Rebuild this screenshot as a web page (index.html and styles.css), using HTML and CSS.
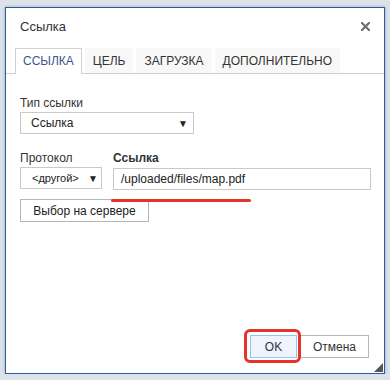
FILE: index.html
```html
<!DOCTYPE html>
<html lang="ru">
<head>
  <meta charset="UTF-8" />
  <meta name="viewport" content="width=device-width, initial-scale=1.0" />
  <title>Ссылка</title>
  <link rel="stylesheet" href="styles.css">
</head>
<body>
  <div class="dialog">
    <div class="title">
      <span>Ссылка</span>
      <svg class="close" width="9" height="9" viewBox="0 0 9 9">
        <path d="M1 1 L8 8 M8 1 L1 8" stroke="#6f6f6f" stroke-width="2.2" stroke-linecap="square" />
      </svg>
    </div>

    <div class="tabs">
      <div class="tab active">ССЫЛКА</div>
      <div class="tab">ЦЕЛЬ</div>
      <div class="tab">ЗАГРУЗКА</div>
      <div class="tab">ДОПОЛНИТЕЛЬНО</div>
    </div>

    <div class="panel">
      <div class="field">
        <label>Тип ссылки</label>
        <div class="select wide"><span>Ссылка</span><span class="arrow">&#9660;</span></div>
      </div>

      <div class="row">
        <div class="field">
          <label>Протокол</label>
          <div class="select small"><span>&lt;другой&gt;</span><span class="arrow">&#9660;</span></div>
        </div>
        <div class="field grow">
          <label class="bold">Ссылка</label>
          <div class="input">/uploaded/files/map.pdf</div>
          <div class="underline"></div>
        </div>
      </div>

      <div class="btn browse">Выбор на сервере</div>
    </div>

    <div class="footer">
      <div class="btn ok">OK</div>
      <div class="btn">Отмена</div>
    </div>

    <div class="resize"></div>
  </div>
</body>
</html>
```

FILE: styles.css
```css
body {
  margin: 0;
  background: #dde1e8;
  font-family: "Liberation Sans", Arial, sans-serif;
  font-size: 12px;
  color: #333;
}
.dialog {
  position: relative;
  box-sizing: border-box;
  margin: 7px 0 0 5px;
  width: 380px;
  height: 367px;
  background: #fff;
  border: 1px solid #2c5a9e;
  box-shadow: 0 0 3px rgba(40, 80, 150, 0.4);
  display: flex;
  flex-direction: column;
}
.title {
  display: flex;
  justify-content: space-between;
  align-items: center;
  height: 36px;
  padding: 0 14px 0 14px;
  font-size: 13px;
  color: #333;
}
.tabs {
  display: flex;
  gap: 3px;
  margin-top: 4px;
  padding-left: 9px;
  border-bottom: 1px solid #d1d1d1;
}
.tab {
  height: 24px;
  line-height: 25px;
  padding: 0 7px;
  background: #f8f8f8;
  color: #333;
  border: 1px solid transparent;
  border-bottom: none;
}
.tab.active {
  background: #fff;
  border-color: #d1d1d1;
  color: #3c5590;
  margin-bottom: -1px;
  height: 25px;
}
.panel {
  padding: 22px 14px 0 14px;
  display: flex;
  flex-direction: column;
}
.field {
  display: flex;
  flex-direction: column;
  position: relative;
}
.field label {
  line-height: 14px;
  margin-bottom: 2px;
}
.bold {
  font-weight: bold;
}
.select,
.input {
  box-sizing: border-box;
  height: 22px;
  border: 1px solid #c9c9c9;
  display: flex;
  align-items: center;
  justify-content: space-between;
  color: #222;
}
.select.wide {
  width: 174px;
  padding: 0 5px 0 10px;
}
.select.small {
  width: 82px;
  padding: 0 3px 0 11px;
  font-size: 11px;
}
.arrow {
  font-size: 10px;
  color: #222;
}
.row {
  display: flex;
  gap: 11px;
  margin-top: 17px;
}
.grow {
  flex: 1;
}
.input {
  padding: 0 7px;
  justify-content: flex-start;
  margin-top: 1px;
  width: 258px;
}
.underline {
  position: absolute;
  left: -2px;
  top: 48px;
  width: 140px;
  height: 3px;
  border-radius: 2px;
  background: #e3342a;
}
.btn {
  box-sizing: border-box;
  height: 23px;
  padding: 0 10px;
  border: 1px solid #b6b6b6;
  background: #fff;
  color: #333;
  display: flex;
  align-items: center;
  justify-content: center;
}
.browse {
  align-self: flex-start;
  margin-top: 9px;
  width: 129px;
  height: 23px;
  color: #222;
}
.footer {
  margin-top: auto;
  display: flex;
  justify-content: flex-end;
  gap: 3px;
  padding: 0 15px 15px 0;
}
.ok {
  position: relative;
  width: 47px;
  background: #eef4fd;
  border-color: #9cc3f0;
}
.ok::after {
  content: "";
  position: absolute;
  left: -7px;
  top: -7px;
  right: -5px;
  bottom: -6px;
  border: 3px solid #e3342a;
  border-radius: 6px;
}
.footer .btn:last-child {
  width: 69px;
}
.resize {
  position: absolute;
  right: 1px;
  bottom: 1px;
  width: 0;
  height: 0;
  border-left: 9px solid transparent;
  border-bottom: 9px solid #555;
}
```
